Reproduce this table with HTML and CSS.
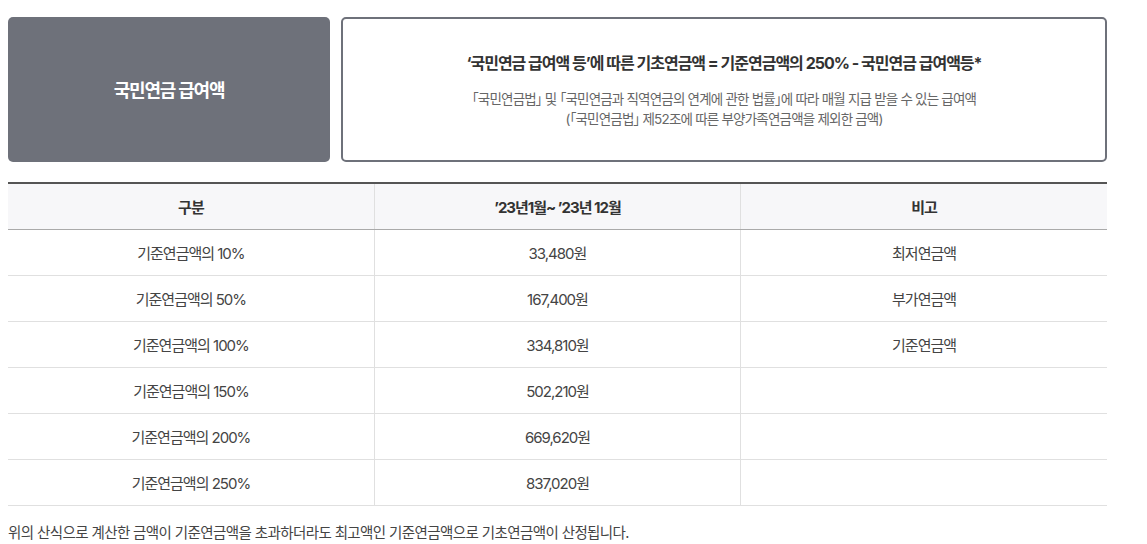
FILE: index.html
```html
<!DOCTYPE html>
<html lang="ko">
<head>
<meta charset="utf-8">
<link rel="stylesheet" href="styles.css">
</head>
<body>
<div class="page">
  <div class="summary">
    <div class="label-box">국민연금 급여액</div>
    <div class="desc-box">
      <p class="formula">‘국민연금 급여액 등’에 따른 기초연금액 = 기준연금액의 250% - 국민연금 급여액등*</p>
      <p class="note">「국민연금법」 및 「국민연금과 직역연금의 연계에 관한 법률」에 따라 매월 지급 받을 수 있는 급여액<br>(「국민연금법」 제52조에 따른 부양가족연금액을 제외한 금액)</p>
    </div>
  </div>
  <table class="grid">
    <thead>
      <tr><th>구분</th><th>’23년1월~ ’23년 12월</th><th>비고</th></tr>
    </thead>
    <tbody>
      <tr><td>기준연금액의 10%</td><td>33,480원</td><td>최저연금액</td></tr>
      <tr><td>기준연금액의 50%</td><td>167,400원</td><td>부가연금액</td></tr>
      <tr><td>기준연금액의 100%</td><td>334,810원</td><td>기준연금액</td></tr>
      <tr><td>기준연금액의 150%</td><td>502,210원</td><td></td></tr>
      <tr><td>기준연금액의 200%</td><td>669,620원</td><td></td></tr>
      <tr><td>기준연금액의 250%</td><td>837,020원</td><td></td></tr>
    </tbody>
  </table>
  <p class="footnote">위의 산식으로 계산한 금액이 기준연금액을 초과하더라도 최고액인 기준연금액으로 기초연금액이 산정됩니다.</p>
</div>
</body>
</html>
```

FILE: styles.css
```css
html, body {
  margin: 0;
  padding: 0;
  background: #fff;
}
body {
  font-family: "Inter", "Noto Sans CJK KR", "Noto Sans", sans-serif;
  color: #333;
}
.page {
  padding: 17px 40px 0 8px;
}
.summary {
  display: flex;
  gap: 11px;
  height: 145px;
}
.label-box {
  flex: 0 0 322px;
  background: #6e717a;
  border-radius: 5px;
  color: #fff;
  font-size: 18px;
  font-weight: 700;
  letter-spacing: -1.2px;
  display: flex;
  align-items: center;
  justify-content: center;
  padding-bottom: 2px;
  box-sizing: border-box;
}
.desc-box {
  flex: 1;
  border: 2px solid #6e717a;
  border-radius: 5px;
  display: flex;
  flex-direction: column;
  align-items: center;
  justify-content: center;
  text-align: center;
  padding-top: 2px;
}
.formula {
  margin: 0 0 15px;
  font-size: 16px;
  font-weight: 700;
  color: #333;
  letter-spacing: -1px;
  line-height: 21px;
}
.note {
  margin: 0;
  font-size: 13.5px;
  color: #666;
  letter-spacing: -0.8px;
  line-height: 20px;
  font-feature-settings: "palt" 1;
}
.grid {
  margin-top: 20px;
  width: 100%;
  border-collapse: collapse;
  table-layout: fixed;
  border-top: 2px solid #555;
  border-bottom: 1px solid #aaa;
}
.grid th {
  background: #f7f7f9;
  height: 45px;
  font-size: 15px;
  font-weight: 700;
  color: #333;
  letter-spacing: -1px;
  border-bottom: 1px solid #aaa;
  padding: 0;
}
.grid td {
  height: 45px;
  font-size: 15px;
  color: #444;
  letter-spacing: -1px;
  text-align: center;
  border-bottom: 1px solid #e0e0e0;
  padding: 0;
}
.grid th + th,
.grid td + td {
  border-left: 1px solid #e0e0e0;
}
.footnote {
  margin: 17px 0 0;
  font-size: 14.5px;
  color: #444;
  letter-spacing: -0.6px;
  line-height: 20px;
}
```
